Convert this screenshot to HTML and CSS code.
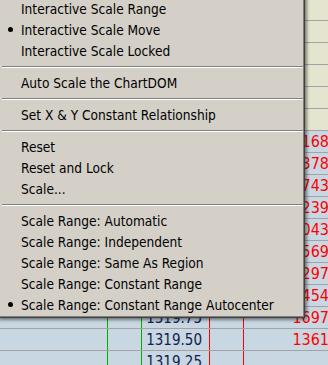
FILE: index.html
```html
<!DOCTYPE html>
<html lang="en">
<head>
    <meta charset="UTF-8">
    <title>Chart scale menu</title>
    <link rel="stylesheet" href="styles.css">
</head>
<body>
    <div class="grid">
        <div class="row top"><div class="cell a"></div><div class="cell b"></div><div class="cell c"></div><div class="cell d"></div><div class="cell e"></div></div>
        <div class="row top"><div class="cell a"></div><div class="cell b"></div><div class="cell c"></div><div class="cell d"></div><div class="cell e"></div></div>
        <div class="row top"><div class="cell a"></div><div class="cell b"></div><div class="cell c"></div><div class="cell d"></div><div class="cell e"></div></div>
        <div class="row top"><div class="cell a"></div><div class="cell b"></div><div class="cell c"></div><div class="cell d"></div><div class="cell e"></div></div>
        <div class="row top"><div class="cell a"></div><div class="cell b"></div><div class="cell c"></div><div class="cell d"></div><div class="cell e"></div></div>
        <div class="row top"><div class="cell a"></div><div class="cell b"></div><div class="cell c"></div><div class="cell d"></div><div class="cell e"></div></div>
        <div class="row"><div class="cell a"></div><div class="cell b"></div><div class="cell c"></div><div class="cell d"></div><div class="cell e">168</div></div>
        <div class="row"><div class="cell a"></div><div class="cell b"></div><div class="cell c"></div><div class="cell d"></div><div class="cell e">378</div></div>
        <div class="row"><div class="cell a"></div><div class="cell b"></div><div class="cell c"></div><div class="cell d"></div><div class="cell e">743</div></div>
        <div class="row"><div class="cell a"></div><div class="cell b"></div><div class="cell c"></div><div class="cell d"></div><div class="cell e">239</div></div>
        <div class="row"><div class="cell a"></div><div class="cell b"></div><div class="cell c"></div><div class="cell d"></div><div class="cell e">043</div></div>
        <div class="row"><div class="cell a"></div><div class="cell b"></div><div class="cell c"></div><div class="cell d"></div><div class="cell e">569</div></div>
        <div class="row"><div class="cell a"></div><div class="cell b"></div><div class="cell c"></div><div class="cell d"></div><div class="cell e">297</div></div>
        <div class="row"><div class="cell a"></div><div class="cell b"></div><div class="cell c"></div><div class="cell d"></div><div class="cell e">454</div></div>
        <div class="row"><div class="cell a"></div><div class="cell b"></div><div class="cell c">1319.75</div><div class="cell d"></div><div class="cell e">1697</div></div>
        <div class="row"><div class="cell a"></div><div class="cell b"></div><div class="cell c">1319.50</div><div class="cell d"></div><div class="cell e">1361</div></div>
        <div class="row"><div class="cell a"></div><div class="cell b"></div><div class="cell c">1319.25</div><div class="cell d"></div><div class="cell e"></div></div>
    </div>

    <!-- context menu over the grid -->
    <div class="menu">
        <div class="item"><span class="mark"></span>Interactive Scale Range</div>
        <div class="item"><span class="mark"><i class="dot"></i></span>Interactive Scale Move</div>
        <div class="item"><span class="mark"></span>Interactive Scale Locked</div>
        <div class="sep"></div>
        <div class="item"><span class="mark"></span>Auto Scale the ChartDOM</div>
        <div class="sep"></div>
        <div class="item"><span class="mark"></span>Set X &amp; Y Constant Relationship</div>
        <div class="sep"></div>
        <div class="item"><span class="mark"></span>Reset</div>
        <div class="item"><span class="mark"></span>Reset and Lock</div>
        <div class="item"><span class="mark"></span>Scale...</div>
        <div class="sep"></div>
        <div class="item"><span class="mark"></span>Scale Range: Automatic</div>
        <div class="item"><span class="mark"></span>Scale Range: Independent</div>
        <div class="item"><span class="mark"></span>Scale Range: Same As Region</div>
        <div class="item"><span class="mark"></span>Scale Range: Constant Range</div>
        <div class="item"><span class="mark"><i class="dot"></i></span>Scale Range: Constant Range Autocenter</div>
    </div>
</body>
</html>
```

FILE: styles.css
```css
html, body {
    margin: 0;
    padding: 0;
}
body {
    width: 328px;
    height: 365px;
    overflow: hidden;
    position: relative;
    background: #c8d7e1;
    font-family: "DejaVu Sans Condensed", "DejaVu Sans", sans-serif;
}
.grid {
    margin-top: -1px;
}
.row {
    display: grid;
    grid-template-columns: 108px 34px 68px 34px 100px;
    height: 22px;
    box-sizing: border-box;
    border-bottom: 1px solid #a3a3a3;
    background: #c8d7e1;
}
.row.top {
    background: #e5e5cf;
}
.cell {
    box-sizing: border-box;
    line-height: 22px;
    white-space: nowrap;
    overflow: hidden;
    text-align: right;
}
.row:not(.top) .a,
.row:not(.top) .b {
    border-right: 1px solid #00b000;
}
.row:not(.top) .c,
.row:not(.top) .d {
    border-right: 1px solid #ff0000;
}
.c {
    padding-right: 7px;
    font-size: 15px;
    color: #102050;
}
.e {
    padding-right: 15px;
    font-size: 16px;
    color: #ff0000;
}
.menu {
    position: absolute;
    left: -3px;
    top: -5px;
    width: 308px;
    box-sizing: border-box;
    padding: 2px 0;
    background: #d4d0c8;
    border: 1px solid #d4d0c8;
    border-right-color: #404040;
    border-bottom-color: #404040;
    box-shadow: inset -1px -1px 0 #808080, 2px 2px 3px rgba(0, 0, 0, 0.45);
    font-size: 13.6px;
    color: #000;
}
.item {
    display: flex;
    align-items: center;
    height: 21px;
    white-space: nowrap;
}
.mark {
    display: flex;
    justify-content: center;
    align-items: center;
    width: 21px;
    padding-left: 2px;
    flex: none;
}
.dot {
    display: block;
    width: 5px;
    height: 5px;
    border-radius: 50%;
    background: #000;
}
.sep {
    height: 11px;
    display: flex;
    align-items: center;
    padding: 0 1px;
}
.sep::before {
    content: "";
    flex: 1;
    height: 1px;
    border-top: 1px solid #808080;
    background: #fff;
    margin-left: 3px;
}
```
